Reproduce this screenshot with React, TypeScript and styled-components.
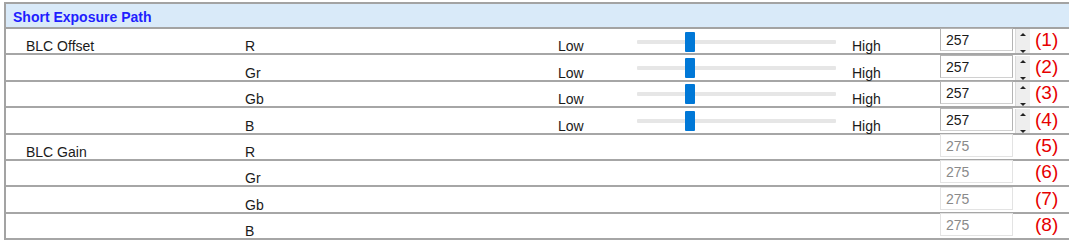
import React from "react"
import styled, { createGlobalStyle } from "styled-components"

const GlobalStyle = createGlobalStyle`
  html, body {
    margin: 0;
    padding: 0;
    background: #ffffff;
  }
  body {
    font-family: "Liberation Sans", Arial, sans-serif;
    font-size: 14px;
    color: #1a1a1a;
  }
`

const Panel = styled.div`
  margin: 2px 0 0 4px;
  width: 1063px;
  border-top: 2px solid #a3a3a3;
  border-left: 2px solid #a3a3a3;
`

const Header = styled.div`
  height: 25px;
  box-sizing: border-box;
  display: flex;
  align-items: center;
  padding: 2px 0 0 7px;
  background: #d9eaf9;
  border-bottom: 2px solid #a3a3a3;
  color: #1f1fff;
  font-weight: bold;
  font-size: 14px;
`

const Row = styled.div`
  height: 26.4px;
  box-sizing: border-box;
  display: flex;
  align-items: flex-end;
  border-bottom: 2px solid #a6a6a6;
`

const Cell = styled.div<{ $w: number }>`
  width: ${(p) => p.$w}px;
  flex: none;
  white-space: nowrap;
  line-height: 13px;
`

const SliderCell = styled.div`
  width: 199px;
  flex: none;
  align-self: center;
  position: relative;
  height: 20px;
  margin: 0 16px 0 0;
  display: flex;
  align-items: center;
  padding-top: 1px;
`

const Track = styled.div`
  width: 100%;
  height: 4px;
  background: #e6e6e6;
  border-radius: 1px;
`

const Thumb = styled.div`
  position: absolute;
  top: 1px;
  width: 10px;
  height: 20px;
  background: #0078d7;
  border-radius: 1px;
`

const NumBox = styled.div<{ $disabled?: boolean }>`
  width: 73px;
  height: 23px;
  box-sizing: border-box;
  flex: none;
  margin-bottom: 2px;
  padding: 3px 0 0 5px;
  border: 1px solid ${(p) => (p.$disabled ? "#e3e3e3" : "#b4b4b4")};
  border-bottom-color: ${(p) => (p.$disabled ? "#e3e3e3" : "#d0d0d0")};
  color: ${(p) => (p.$disabled ? "#8a8a8a" : "#1a1a1a")};
  line-height: 16px;
`

const Spinner = styled.div`
  width: 15px;
  height: 24px;
  flex: none;
  margin-left: 2px;
  background: #eeeeee;
  border-left: 1px solid #dadada;
  display: flex;
  flex-direction: column;
  justify-content: space-between;
  align-items: center;
  padding: 4px 0 0;
  box-sizing: border-box;
`

const Arrow = styled.div<{ $up?: boolean }>`
  width: 0;
  height: 0;
  border-left: 3px solid transparent;
  border-right: 3px solid transparent;
  ${(p) => (p.$up ? "border-bottom: 3px solid #222;" : "border-top: 3px solid #222;")}
`

const Tag = styled.div<{ $gap: number }>`
  margin-left: ${(p) => p.$gap}px;
  margin-bottom: 2px;
  color: #e60000;
  font-size: 19px;
  line-height: 22px;
`

type RowData = { group: string; ch: string; slider: boolean; value: string }

const rows: RowData[] = [
  { group: "BLC Offset", ch: "R", slider: true, value: "257" },
  { group: "", ch: "Gr", slider: true, value: "257" },
  { group: "", ch: "Gb", slider: true, value: "257" },
  { group: "", ch: "B", slider: true, value: "257" },
  { group: "BLC Gain", ch: "R", slider: false, value: "275" },
  { group: "", ch: "Gr", slider: false, value: "275" },
  { group: "", ch: "Gb", slider: false, value: "275" },
  { group: "", ch: "B", slider: false, value: "275" },
]

export default function App() {
  return (
    <>
      <GlobalStyle />
      <Panel>
        <Header>Short Exposure Path</Header>
        {rows.map((r, i) => (
          <Row key={i}>
            <Cell $w={20} />
            <Cell $w={219}>{r.group}</Cell>
            <Cell $w={313}>{r.ch}</Cell>
            {r.slider ? (
              <>
                <Cell $w={79}>Low</Cell>
                <SliderCell>
                  <Track />
                  <Thumb style={{ left: 48 }} />
                </SliderCell>
                <Cell $w={88}>High</Cell>
                <NumBox>{r.value}</NumBox>
                <Spinner>
                  <Arrow $up />
                  <Arrow />
                </Spinner>
                <Tag $gap={5}>({i + 1})</Tag>
              </>
            ) : (
              <>
                <Cell $w={382} />
                <NumBox $disabled>{r.value}</NumBox>
                <Tag $gap={22}>({i + 1})</Tag>
              </>
            )}
          </Row>
        ))}
      </Panel>
    </>
  )
}
